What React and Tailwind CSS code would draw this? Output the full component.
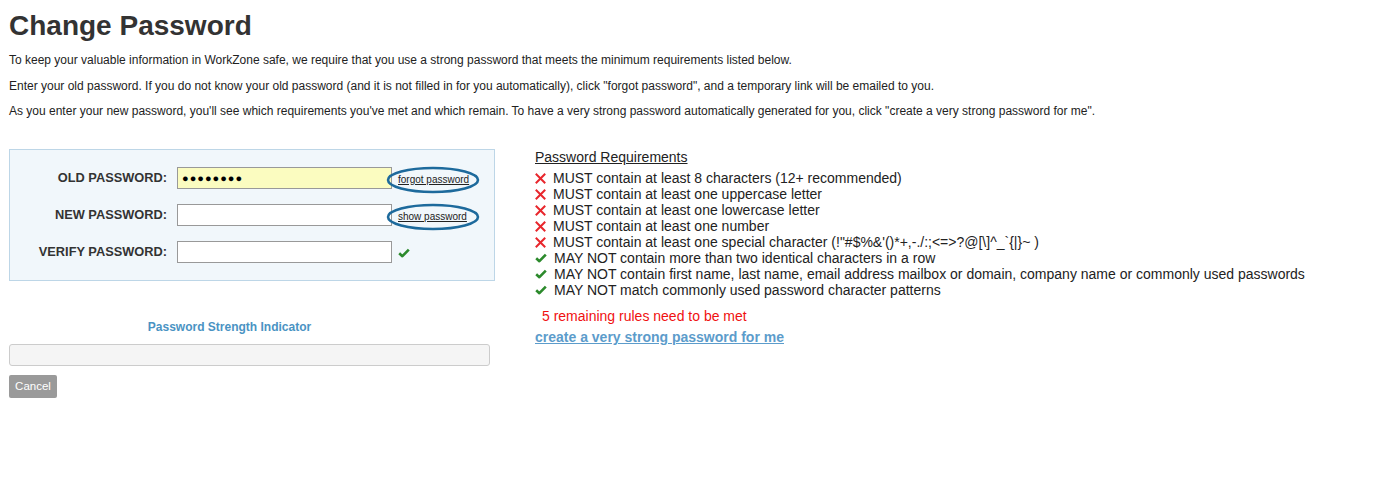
import React from 'react';

const RULES = [
  { ok: false, text: 'MUST contain at least 8 characters (12+ recommended)' },
  { ok: false, text: 'MUST contain at least one uppercase letter' },
  { ok: false, text: 'MUST contain at least one lowercase letter' },
  { ok: false, text: 'MUST contain at least one number' },
  { ok: false, text: 'MUST contain at least one special character (!"#$%&\'()*+,-./:;<=>?@[\\]^_`{|}~ )' },
  { ok: true, text: 'MAY NOT contain more than two identical characters in a row' },
  { ok: true, text: 'MAY NOT contain first name, last name, email address mailbox or domain, company name or commonly used passwords' },
  { ok: true, text: 'MAY NOT match commonly used password character patterns' },
];

function Cross() {
  return (
    <svg width="11" height="11" viewBox="0 0 11 11" className="shrink-0">
      <path d="M1.5 1.5 L9.5 9.5 M9.5 1.5 L1.5 9.5" stroke="#e8262c" strokeWidth="2" strokeLinecap="square" />
    </svg>
  );
}

function Check() {
  return (
    <svg width="12" height="10" viewBox="0 0 12 10" className="shrink-0">
      <path d="M1.2 5.2 L4.4 8.2 L10.8 1.6" stroke="#2c8a2c" strokeWidth="2.6" fill="none" strokeLinejoin="round" />
    </svg>
  );
}

function Circled({ children }) {
  return (
    <div className="relative ml-[6px] mt-[3px] flex items-center">
      <span className="text-[10px] leading-[12px] text-[#222] underline">{children}</span>
      <svg className="pointer-events-none absolute left-[-12px] top-[-8px]" width="94" height="28" viewBox="0 0 94 28">
        <ellipse cx="47" cy="14" rx="45" ry="12" fill="none" stroke="#1d6a9c" strokeWidth="2.6" />
      </svg>
    </div>
  );
}

function Row({ label, children, yellow, dots }) {
  return (
    <div className="flex items-center">
      <label className="w-[157px] text-right text-[12.8px] font-bold text-[#333]">{label}</label>
      <div
        className={`ml-[10px] flex h-[22px] w-[215px] items-center border border-[#999] px-[4px] ${yellow ? 'bg-[#fbfcc0]' : 'bg-white'}`}
      >
        {dots && <span className="text-[11px] tracking-[1px] text-black">●●●●●●●●</span>}
      </div>
      {children}
    </div>
  );
}

export default function App() {
  return (
    <div className="min-h-[496px] bg-white px-[9px] pt-[8px] text-[#333]" style={{ fontFamily: '"Liberation Sans", Arial, sans-serif' }}>
      <h1 className="text-[28px] font-bold leading-[36px] text-[#333]">Change Password</h1>

      <div className="mt-[9px] flex flex-col gap-[10.5px] text-[12px] leading-[15px] text-[#222]">
        <p>To keep your valuable information in WorkZone safe, we require that you use a strong password that meets the minimum requirements listed below.</p>
        <p>Enter your old password. If you do not know your old password (and it is not filled in for you automatically), click "forgot password", and a temporary link will be emailed to you.</p>
        <p>As you enter your new password, you'll see which requirements you've met and which remain. To have a very strong password automatically generated for you, click "create a very strong password for me".</p>
      </div>

      <div className="mt-[30px] flex gap-[40px]">
        {/* left column */}
        <div className="w-[486px] shrink-0">
          <div className="flex flex-col gap-[15px] border border-[#bdd6e7] bg-[#f1f7fb] pb-[17px] pt-[17px]">
            <Row label="OLD PASSWORD:" yellow dots>
              <Circled>forgot password</Circled>
            </Row>
            <Row label="NEW PASSWORD:">
              <Circled>show password</Circled>
            </Row>
            <Row label="VERIFY PASSWORD:">
              <div className="ml-[6px] mt-[2px]">
                <Check />
              </div>
            </Row>
          </div>

          <div className="mt-[37px] w-[441px] text-center text-[12px] font-bold text-[#4a93c3]">Password Strength Indicator</div>
          <div className="mt-[8px] h-[22px] w-[481px] rounded-[3px] border border-[#cccccc] bg-[#f5f5f5]"></div>
          <button className="mt-[9px] h-[23px] w-[48px] rounded-[2px] bg-[#9a9a9a] text-[11.5px] text-white">Cancel</button>
        </div>

        {/* right column */}
        <div className="text-[14px] leading-[16px] text-[#222]">
          <div className="underline">Password Requirements</div>
          <ul className="mt-[5px]">
            {RULES.map((r, i) => (
              <li key={i} className="flex items-center gap-[7px]">
                {r.ok ? <Check /> : <Cross />}
                <span>{r.text}</span>
              </li>
            ))}
          </ul>
          <div className="mt-[10px] pl-[7px] text-[#f01010]">5 remaining rules need to be met</div>
          <a href="#" className="mt-[5px] block font-bold text-[#5c9ccb] underline">create a very strong password for me</a>
        </div>
      </div>
    </div>
  );
}
